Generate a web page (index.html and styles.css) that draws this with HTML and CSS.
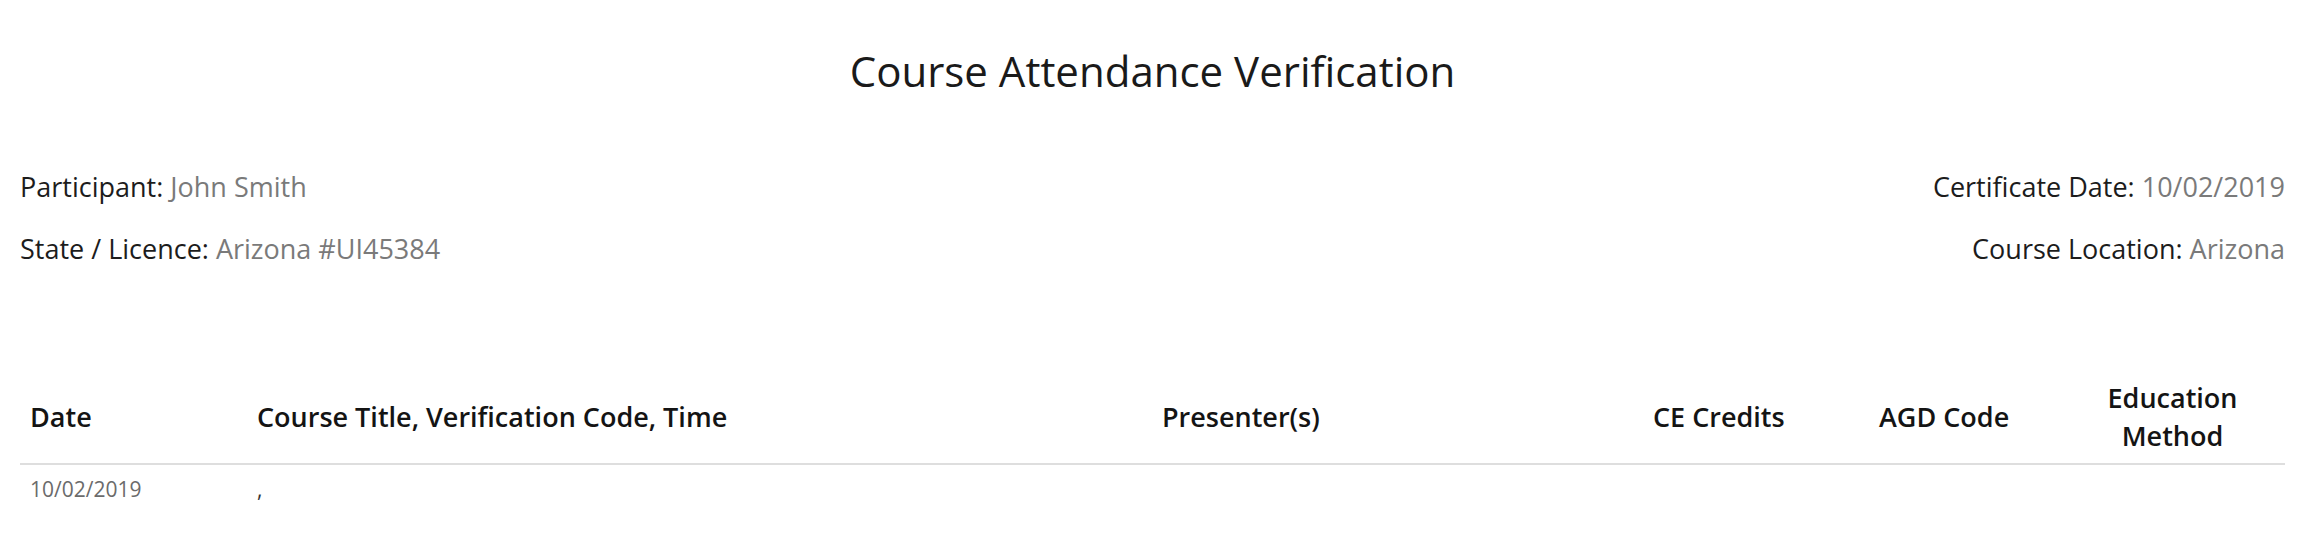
FILE: index.html
```html
<!DOCTYPE html>
<html lang="en">
<head>
<meta charset="utf-8">
<title>Course Attendance Verification</title>
<link rel="stylesheet" href="styles.css">
</head>
<body>
<div class="page">
  <h1 class="title">Course Attendance Verification</h1>
  <div class="info">
    <div class="info-col">
      <div class="info-row"><span class="label">Participant:</span> <span class="value">John Smith</span></div>
      <div class="info-row"><span class="label">State / Licence:</span> <span class="value">Arizona #UI45384</span></div>
    </div>
    <div class="info-col info-right">
      <div class="info-row"><span class="label">Certificate Date:</span> <span class="value">10/02/2019</span></div>
      <div class="info-row"><span class="label">Course Location:</span> <span class="value">Arizona</span></div>
    </div>
  </div>
  <table class="courses">
    <colgroup>
      <col class="c-date">
      <col class="c-title">
      <col class="c-presenter">
      <col class="c-credits">
      <col class="c-agd">
      <col class="c-method">
    </colgroup>
    <thead>
      <tr>
        <th>Date</th>
        <th>Course Title, Verification Code, Time</th>
        <th>Presenter(s)</th>
        <th>CE Credits</th>
        <th>AGD Code</th>
        <th class="center">Education<br>Method</th>
      </tr>
    </thead>
    <tbody>
      <tr>
        <td class="date">10/02/2019</td>
        <td>,</td>
        <td></td>
        <td></td>
        <td></td>
        <td></td>
      </tr>
    </tbody>
  </table>
</div>
</body>
</html>
```
FILE: styles.css
```css
html, body {
  margin: 0;
  padding: 0;
  background: #ffffff;
}
body {
  font-family: "Open Sans", "Liberation Sans", sans-serif;
  color: #1c1c1c;
}
.page {
  padding: 42px 23px 0 20px;
}
.title {
  margin: 0;
  font-size: 42px;
  font-weight: 400;
  line-height: 57px;
  text-align: center;
  color: #1a1a1a;
}
.info {
  display: flex;
  justify-content: space-between;
  margin-top: 69px;
}
.info-col {
  display: flex;
  flex-direction: column;
  gap: 25px;
}
.info-right {
  align-items: flex-end;
}
.info-row {
  font-size: 27px;
  line-height: 37px;
}
.label {
  color: #1c1c1c;
}
.value {
  color: #7a7a7a;
}
.courses {
  margin-top: 104px;
  width: 100%;
  border-collapse: collapse;
  table-layout: fixed;
}
.c-date { width: 227px; }
.c-title { width: 905px; }
.c-presenter { width: 491px; }
.c-credits { width: 226px; }
.c-agd { width: 191px; }
.courses th {
  font-size: 27px;
  font-weight: 600;
  line-height: 38px;
  text-align: left;
  vertical-align: middle;
  padding: 8px 10px;
  border-bottom: 2px solid #dedede;
  color: #141414;
}
.courses th.center {
  text-align: center;
}
.courses td {
  font-size: 21px;
  line-height: 31px;
  padding: 9px 10px 6px;
  vertical-align: top;
  color: #333;
}
.courses td.date {
  color: #6b6b6b;
}
```
